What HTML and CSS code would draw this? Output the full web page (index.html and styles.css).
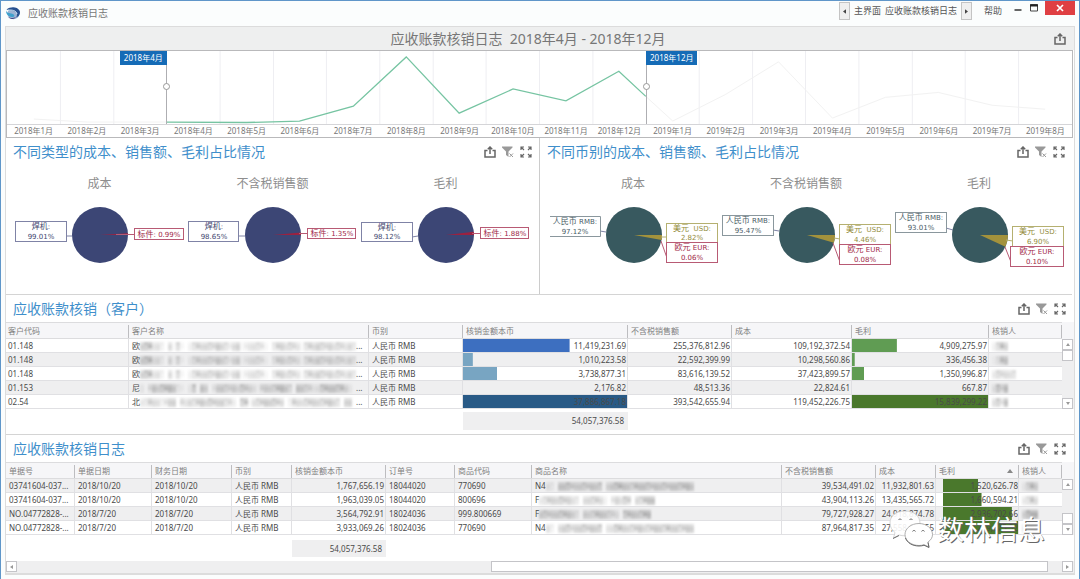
FILE: index.html
```html
<!DOCTYPE html>
<html lang="zh-CN">
<head>
<meta charset="utf-8">
<title>应收账款核销日志</title>
<link rel="stylesheet" href="styles.css">
</head>
<body>
<svg class="defs" width="0" height="0" aria-hidden="true">
  <symbol id="share" viewBox="0 0 12 12"><path d="M3.500 4.500H1v6.500h10V4.500H8.500M6 8V1.200M3.800 3.200L6 1l2.200 2.200" fill="none" stroke="#666" stroke-width="1.500"/></symbol>
  <symbol id="funnel" viewBox="0 0 12 12"><path d="M0 0.500h10.500v1L6.500 5.500V11L4 9V5.500L0 1.500z" fill="#999"/><path d="M7.500 7.500l3.500 3.500M11 7.500L7.500 11" stroke="#999" stroke-width="1"/></symbol>
  <symbol id="expand" viewBox="0 0 12 12"><path d="M1 4V1h3M8 1h3v3M11 8v3H8M4 11H1V8M1 1l3 3M11 1L8 4M11 11L8 8M1 11l3-3" fill="none" stroke="#666" stroke-width="1.200"/></symbol>
</svg>

<div class="window">
  <header class="titlebar">
    <svg class="logo" viewBox="0 0 16 16"><ellipse cx="8.500" cy="8.500" rx="6" ry="5.800" fill="#9db3d3"/><path d="M1.500 4.500c4-3.500 11-3 13 1 1.500 3-.500 6-3.500 7 1.500-2 1.500-5-1-6C7 5 4 5.500 1.500 4.500z" fill="#27508f"/><path d="M1 5.500c1 3 5 2.500 7 3.500s2 3-1 3C3 12 1 9 1 5.500z" fill="#3fa0cc"/><path d="M2.500 11c2 2.500 6 2.500 8.500 1-2 3-6.500 2.500-8.500-1z" fill="#3c3f80"/><path d="M3 5c4 0 8 0 9 4" fill="none" stroke="#cfe6f5"/></svg>
    <h1 class="app-title">应收账款核销日志</h1>
    <nav class="tabs">
      <button class="tab-arrow" aria-label="向左"><svg viewBox="0 0 4 6"><path d="M4 0v6L0 3z"/></svg></button>
      <a class="tab" href="#">主界面</a>
      <a class="tab" href="#">应收账款核销日志</a>
      <button class="tab-arrow" aria-label="向右"><svg viewBox="0 0 4 6"><path d="M0 0v6l4-3z"/></svg></button>
      <a class="tab help" href="#">帮助</a>
    </nav>
    <div class="win-buttons">
      <button class="win-btn" aria-label="最小化"><svg viewBox="0 0 8 8"><path d="M0.500 6h7" stroke="#333" stroke-width="1.500"/></svg></button>
      <button class="win-btn" aria-label="最大化"><svg viewBox="0 0 8 8"><path d="M0.500 0.500h7v6.500h-7z" fill="none" stroke="#444"/><path d="M0 1.500h8" stroke="#222" stroke-width="2"/></svg></button>
      <button class="win-btn close" aria-label="关闭"><svg viewBox="0 0 8 8"><path d="M1 1l6 6M7 1L1 7" stroke="#fff" stroke-width="1.700"/></svg></button>
    </div>
  </header>

  <main class="dashboard">
    <div class="banner">
      <h2 class="banner-title">应收账款核销日志&nbsp; 2018年4月 - 2018年12月</h2>
      <button class="tool" aria-label="导出"><svg><use href="#share"/></svg></button>
    </div>

    <section class="timeline">
      <div class="plot">
        <svg class="plot-lines" viewBox="0 0 1067 74" preserveAspectRatio="none">
          <path class="grid-lines" d="M53.500 0V74M107 0V74M213.500 0V74M267 0V74M320 0V74M373.500 0V74M427 0V74M480 0V74M533.500 0V74M587 0V74M693.500 0V74M747 0V74M800 0V74M853.500 0V74M907 0V74M960 0V74M1013.500 0V74"/>
          <path class="muted-line" d="M27 69L80 72L160 72M640 46L667 71L720 44L773 11L827 68L880 47L933 42L987 55L1040 59"/>
          <path class="range-line" d="M160 72L240 72.500L293 71L347 56L400 6L453 63L507 38.500L560 50.500L613 20.500L640 46"/>
        </svg>
        <div class="range">
          <span class="knob"></span><span class="knob end"></span>
          <span class="tag">2018年4月</span><span class="tag end">2018年12月</span>
        </div>
      </div>
      <div class="axis"><span>2018年1月</span><span>2018年2月</span><span>2018年3月</span><span>2018年4月</span><span>2018年5月</span><span>2018年6月</span><span>2018年7月</span><span>2018年8月</span><span>2018年9月</span><span>2018年10月</span><span>2018年11月</span><span>2018年12月</span><span>2019年1月</span><span>2019年2月</span><span>2019年3月</span><span>2019年4月</span><span>2019年5月</span><span>2019年6月</span><span>2019年7月</span><span>2019年8月</span></div>
    </section>

    <div class="pie-row">
      <section class="panel">
        <div class="panel-head"><h3>不同类型的成本、销售额、毛利占比情况</h3><div class="tools"><button class="tool" aria-label="导出"><svg><use href="#share"/></svg></button><button class="tool" aria-label="清除筛选"><svg><use href="#funnel"/></svg></button><button class="tool" aria-label="最大化"><svg><use href="#expand"/></svg></button></div></div>
        <div class="pies">
          <figure><figcaption>成本</figcaption>
            <svg class="pie navy" viewBox="0 0 173 100"><circle cx="87" cy="41" r="28"/><path class="red-fill" d="M87 41H115L114.900 39.300z"/><path class="lead" d="M53 42h6"/><path class="lead red" d="M103 40.500H122"/><rect x="2.500" y="27.500" width="51" height="20"/><text x="28" y="35"><tspan class="zh">焊机</tspan>:</text><text x="28" y="45">99.01%</text><rect class="red" x="121.500" y="34.500" width="49" height="11"/><text class="red" x="146" y="43"><tspan class="zh">标件</tspan>: 0.99%</text></svg></figure>
          <figure><figcaption>不含税销售额</figcaption>
            <svg class="pie navy" viewBox="0 0 173 100"><circle cx="87" cy="41" r="28"/><path class="red-fill" d="M87 41H115L114.800 38.600z"/><path class="lead" d="M53 42h6"/><path class="lead red" d="M113 39.500H122"/><rect x="2.500" y="27.500" width="50" height="20"/><text x="28" y="35"><tspan class="zh">焊机</tspan>:</text><text x="28" y="45">98.65%</text><rect class="red" x="121.500" y="34.500" width="48" height="10"/><text class="red" x="146" y="42"><tspan class="zh">标件</tspan>: 1.35%</text></svg></figure>
          <figure><figcaption>毛利</figcaption>
            <svg class="pie navy" viewBox="0 0 173 100"><circle cx="87" cy="41" r="28"/><path class="red-fill" d="M87 41H115L114.800 37.700z"/><path class="lead" d="M53 43l6-1"/><path class="lead red" d="M113 39.500H122"/><rect x="2.500" y="28.500" width="51" height="19"/><text x="28" y="36"><tspan class="zh">焊机</tspan>:</text><text x="28" y="45">98.12%</text><rect class="red" x="121.500" y="33.500" width="48" height="11"/><text class="red" x="146" y="42"><tspan class="zh">标件</tspan>: 1.88%</text></svg></figure>
        </div>
      </section>
      <section class="panel">
        <div class="panel-head"><h3>不同币别的成本、销售额、毛利占比情况</h3><div class="tools"><button class="tool" aria-label="导出"><svg><use href="#share"/></svg></button><button class="tool" aria-label="清除筛选"><svg><use href="#funnel"/></svg></button><button class="tool" aria-label="最大化"><svg><use href="#expand"/></svg></button></div></div>
        <div class="pies">
          <figure><figcaption>成本</figcaption>
            <svg class="pie teal" viewBox="0 0 173 100"><circle cx="87" cy="41" r="28"/><path class="gold-fill" d="M87 41H115A28 28 0 0 1 114.600 46z"/><path class="lead" d="M53 37l6 1"/><path class="lead gold" d="M114 43h6"/><path class="lead red" d="M114 47l6 17"/><path class="box" d="M3 22.500H53.500V42.500H3"/><text x="28" y="30"><tspan class="zh">人民币</tspan> RMB:</text><text x="28" y="40">97.12%</text><rect class="gold" x="119.500" y="29.500" width="51" height="19"/><text class="gold" x="145" y="37"><tspan class="zh">美元</tspan>&#160; USD:</text><text class="gold" x="145" y="46">2.82%</text><rect class="red" x="119.500" y="48.500" width="51" height="20"/><text class="red" x="145" y="56"><tspan class="zh">欧元</tspan> EUR:</text><text class="red" x="145" y="66">0.06%</text></svg></figure>
          <figure><figcaption>不含税销售额</figcaption>
            <svg class="pie teal" viewBox="0 0 173 100"><circle cx="87" cy="41" r="28"/><path class="gold-fill" d="M87 41H115A28 28 0 0 1 113.900 48.700z"/><path class="lead" d="M53 36l6 1"/><path class="lead gold" d="M114 44l6 1"/><path class="lead red" d="M113 49l7 19"/><rect x="2.500" y="21.500" width="51" height="20"/><text x="28" y="29"><tspan class="zh">人民币</tspan> RMB:</text><text x="28" y="39">95.47%</text><rect class="gold" x="119.500" y="30.500" width="51" height="20"/><text class="gold" x="145" y="38"><tspan class="zh">美元</tspan>&#160; USD:</text><text class="gold" x="145" y="48">4.46%</text><rect class="red" x="119.500" y="50.500" width="51" height="20"/><text class="red" x="145" y="58"><tspan class="zh">欧元</tspan> EUR:</text><text class="red" x="145" y="68">0.08%</text></svg></figure>
          <figure><figcaption>毛利</figcaption>
            <svg class="pie teal" viewBox="0 0 173 100"><circle cx="87" cy="41" r="28"/><path class="gold-fill" d="M87 41H115A28 28 0 0 1 112.400 52.800z"/><path class="lead" d="M53 34l7 2"/><path class="lead gold" d="M113 46l7 1"/><path class="lead red" d="M112 53l6 15"/><rect x="2.500" y="18.500" width="51" height="20"/><text x="28" y="26"><tspan class="zh">人民币</tspan> RMB:</text><text x="28" y="36">93.01%</text><rect class="gold" x="119.500" y="32.500" width="51" height="20"/><text class="gold" x="145" y="40"><tspan class="zh">美元</tspan>&#160; USD:</text><text class="gold" x="145" y="50">6.90%</text><rect class="red" x="117.500" y="52.500" width="53" height="20"/><text class="red" x="144" y="60"><tspan class="zh">欧元</tspan> EUR:</text><text class="red" x="144" y="70">0.10%</text></svg></figure>
        </div>
      </section>
    </div>

    <section class="table-panel">
      <div class="panel-head"><h3>应收账款核销（客户）</h3><div class="tools"><button class="tool" aria-label="导出"><svg><use href="#share"/></svg></button><button class="tool" aria-label="清除筛选"><svg><use href="#funnel"/></svg></button><button class="tool" aria-label="最大化"><svg><use href="#expand"/></svg></button></div></div>
      <div class="grid">
        <table class="customers">
          <colgroup><col class="w123"><col><col class="w94"><col class="w165"><col class="w104"><col class="w120"><col class="w137"><col class="w74"></colgroup>
          <thead><tr><th>客户代码</th><th>客户名称</th><th>币别</th><th>核销金额本币</th><th>不含税销售额</th><th>成本</th><th>毛利</th><th>核销人</th></tr></thead>
          <tbody>
            <tr><td>01.148</td><td>欧<i class="mask" data-tone="677342041510245455465424612344310355454314546545454353"></i>...</td><td>人民币 RMB</td><td class="num bar blue" style="--value:65%">11,419,231.69</td><td class="num">255,376,812.96</td><td class="num">109,192,372.54</td><td class="num bar green" style="--value:33%">4,909,275.97</td><td><i class="mask" data-tone="2575"></i></td></tr>
            <tr><td>01.148</td><td>欧<i class="mask" data-tone="677342041510245455465424612344310355454314546545454353"></i>...</td><td>人民币 RMB</td><td class="num bar sky" style="--value:6%">1,010,223.58</td><td class="num">22,592,399.99</td><td class="num">10,298,560.86</td><td class="num bar green" style="--value:2%">336,456.38</td><td><i class="mask" data-tone="1366"></i></td></tr>
            <tr><td>01.148</td><td>欧<i class="mask" data-tone="677342041510245455465424612344310355454314546545454353"></i>...</td><td>人民币 RMB</td><td class="num bar sky" style="--value:21%">3,738,877.31</td><td class="num">83,616,139.52</td><td class="num">37,423,899.57</td><td class="num bar green" style="--value:9%">1,350,996.87</td><td><i class="mask" data-tone="354444"></i></td></tr>
            <tr><td>01.153</td><td>尼<i class="mask" data-tone="203656676210260650256545465431455567640665423666766420"></i>...</td><td>人民币 RMB</td><td class="num">2,176.82</td><td class="num">48,513.36</td><td class="num">22,824.61</td><td class="num">667.87</td><td><i class="mask" data-tone="3747"></i></td></tr>
            <tr><td>02.54</td><td>北<i class="mask" data-tone="335442356043545656556442066145566654025445555556540560"></i>...</td><td>人民币 RMB</td><td class="num bar deep" style="--value:100%">37,886,867.18</td><td class="num">393,542,655.94</td><td class="num">119,452,226.75</td><td class="num bar forest" style="--value:100%">15,839,299.22</td><td><i class="mask" data-tone="4637"></i></td></tr>
          </tbody>
          <tfoot><tr><td colspan="3"></td><td><div class="total">54,057,376.58</div></td><td colspan="4"></td></tr></tfoot>
        </table>
        <div class="vscroll rows5"><button class="up" aria-label="向上"></button><span class="thumb"></span><button class="down" aria-label="向下"></button></div>
      </div>
    </section>

    <section class="table-panel">
      <div class="panel-head"><h3>应收账款核销日志</h3><div class="tools"><button class="tool" aria-label="导出"><svg><use href="#share"/></svg></button><button class="tool" aria-label="清除筛选"><svg><use href="#funnel"/></svg></button><button class="tool" aria-label="最大化"><svg><use href="#expand"/></svg></button></div></div>
      <div class="grid">
        <table class="log">
          <colgroup><col class="w69"><col class="w77"><col class="w80"><col class="w60"><col class="w94"><col class="w69"><col class="w77"><col><col class="w94"><col class="w60"><col class="w83"><col class="w44"></colgroup>
          <thead><tr><th>单据号</th><th>单据日期</th><th>财务日期</th><th>币别</th><th>核销金额本币</th><th>订单号</th><th>商品代码</th><th>商品名称</th><th>不含税销售额</th><th>成本</th><th><div class="sorted">毛利<svg viewBox="0 0 6 4"><path d="M3 0l3 4H0z"/></svg></div></th><th>核销人</th></tr></thead>
          <tbody>
            <tr><td>03741604-037...</td><td>2018/10/20</td><td>2018/10/20</td><td>人民币 RMB</td><td class="num">1,767,656.19</td><td>18044020</td><td>770690</td><td>N4<i class="mask" data-tone="3206775566566604677665667656665676676"></i></td><td class="num">39,534,491.02</td><td class="num">11,932,801.63</td><td class="num bar forest inset" style="--value:43%">1,520,626.78</td><td><i class="mask" data-tone="2575"></i></td></tr>
            <tr><td>03741604-037...</td><td>2018/10/20</td><td>2018/10/20</td><td>人民币 RMB</td><td class="num">1,963,039.05</td><td>18044020</td><td>800696</td><td>F<i class="mask" data-tone="34555655430455542035465055678"></i></td><td class="num">43,904,113.26</td><td class="num">13,435,565.72</td><td class="num bar forest inset" style="--value:47%">1,660,594.21</td><td><i class="mask" data-tone="3464"></i></td></tr>
            <tr><td>NO.04772828-...</td><td>2018/7/20</td><td>2018/7/20</td><td>人民币 RMB</td><td class="num">3,564,792.91</td><td>18024036</td><td>999.800669</td><td>F<i class="mask" data-tone="6655666653055566654306666677"></i></td><td class="num">79,727,928.27</td><td class="num">24,918,874.78</td><td class="num bar forest inset" style="--value:84%">2,936,702.66</td><td><i class="mask" data-tone="5878"></i></td></tr>
            <tr><td>NO.04772828-...</td><td>2018/7/20</td><td>2018/7/20</td><td>人民币 RMB</td><td class="num">3,933,069.26</td><td>18024036</td><td>770690</td><td>N4<i class="mask" data-tone="4204664566566603466555565556656565566"></i></td><td class="num">87,964,817.35</td><td class="num">27,558,185.55</td><td class="num bar forest inset" style="--value:93%">3,239,875.52</td><td><i class="mask" data-tone="3555"></i></td></tr>
          </tbody>
          <tfoot><tr><td colspan="4"></td><td><div class="total">54,057,376.58</div></td><td colspan="7"></td></tr></tfoot>
        </table>
        <div class="vscroll rows4"><button class="up" aria-label="向上"></button><span class="thumb low"></span><button class="down" aria-label="向下"></button></div>
      </div>
      <div class="hscroll"><button class="left" aria-label="向左"></button><span class="track"><span class="hthumb"></span></span><button class="right" aria-label="向右"></button></div>
      <div class="watermark">
        <svg viewBox="0 0 44 38"><g fill="#fff" stroke="#ccc" stroke-width="0.800"><path d="M16 1C7 1 1 6 1 13c0 4 2 7 5 9.500L4.500 28 10 25c2 .6 4 .8 6 .8 9 0 15-5.500 15-12.500S25 1 16 1z" fill-opacity=".9"/><path d="M30 13.500c-8 0-14 5-14 11s6 11 14 11c2 0 3.500-.3 5-.8L40 37l-1-5c3-2 4.500-4.500 4.500-7.500 0-6-6-11-13.500-11z" stroke="#999"/></g><path d="M16.500 28C18 32.500 23 36 30 36q3 0 5-.800L40 37.500l-1-5M4 28.500L10 25.500" stroke="#666" fill="none"/><g fill="none" stroke="#777"><path d="M9.500 10a1.600 1.600 0 0 1 3 0M20.500 10a1.600 1.600 0 0 1 3 0M23.500 21.500a1.600 1.600 0 0 1 3 0M32.500 21.500a1.600 1.600 0 0 1 3 0"/></g></svg>
        <span>数林信息</span>
      </div>
    </section>
  </main>
</div>
<script src="masks.js"></script>
</body>
</html>
```
FILE: styles.css
```css
* { box-sizing: border-box; }
body {
  margin: 0;
  background: #fbfcfd;
  color: #4a4a4a;
  font: 8px/12px "Noto Sans", "Noto Sans CJK SC", sans-serif;
}
h1, h2, h3, figure { margin: 0; font-weight: 400; }
button { margin: 0; padding: 0; border: 0; background: none; }
a { color: inherit; text-decoration: none; }
.defs { position: absolute; }

.window {
  min-height: 100vh;
  padding: 0 4px 4px;
  border: 1px solid #5f96c9;
  border-bottom: 0;
  background: #fbfdfd;
}
.titlebar { display: flex; align-items: flex-start; height: 25px; }
.logo { width: 16px; height: 16px; margin-top: 4px; }
.app-title { margin-left: 7px; font-size: 10px; line-height: 24px; color: #777; }
.tabs { display: flex; gap: 4px; margin-left: auto; font-size: 9px; line-height: 19px; color: #555; }
.tab-arrow {
  display: flex; align-items: center; justify-content: center;
  width: 11px; height: 18px; margin-top: 1px;
  border: 1px solid #c4c4c4; background: #efefef;
}
.tab-arrow svg { width: 3px; height: 5px; fill: #444; }
.help { margin-left: 8px; }
.win-buttons { display: flex; margin-left: 8px; }
.win-btn { display: flex; justify-content: center; width: 16px; height: 14px; padding-top: 3px; }
.win-btn svg { width: 8px; height: 8px; }
.win-btn.close { width: 30px; margin-left: 3px; background: #df3f43; }

.dashboard { border: 1px solid #dcdcdc; border-width: 1px 1px 2px; background: #fff; }
.banner { display: flex; align-items: center; height: 23px; padding: 0 8px; background: #eeefef; }
.banner-title { flex: 1; padding-right: 12px; text-align: center; font-size: 14px; line-height: 23px; color: #777; }
.tool { display: block; width: 12px; height: 12px; }
.tool svg { display: block; width: 12px; height: 12px; }

.timeline { border: 1px solid #b9b9bb; margin-right: 1px; }
.plot { position: relative; height: 74px; border-bottom: 1px solid #d5d5d8; }
.plot-lines { display: block; width: 100%; height: 73px; }
.plot-lines path { fill: none; vector-effect: non-scaling-stroke; }
.grid-lines { stroke: #eeeef2; }
.muted-line { stroke: #f2f2f2; }
.range-line { stroke: #76c4a2; stroke-width: 1.3px; }
.range {
  position: absolute; top: 0; bottom: 0; left: 15%; right: 40%;
  margin: 0 -1px;
  border: solid #aeaeb2; border-width: 0 1px;
}
.knob {
  position: absolute; top: 32px; left: -4px; width: 7px; height: 7px;
  border: 1px solid #999; border-radius: 50%; background: #fff;
}
.knob.end { left: auto; right: -4px; }
.tag {
  position: absolute; top: 0; right: 100%; padding: 0 4px;
  background: #156bb6; color: #fff; line-height: 14px; white-space: nowrap;
}
.tag.end { right: auto; left: 100%; }
.axis { display: grid; grid-template-columns: repeat(20, 1fr); color: #777; text-align: center; white-space: nowrap; }

.pie-row { display: grid; grid-template-columns: 1fr 1fr; margin-right: 2px; border-bottom: 1px solid #d4d4d4; }
.panel + .panel { border-left: 1px solid #ccc; }
.panel-head { display: flex; align-items: center; justify-content: space-between; height: 27px; padding: 0 8px 0 7px; }
.panel .panel-head { padding-right: 7px; }
.panel-head h3 { font-size: 14px; line-height: 27px; color: #3f8fcb; }
.tools { display: flex; gap: 6px; }
.pies { display: flex; justify-content: center; padding-top: 9px; }
.pies figcaption { font-size: 12px; line-height: 20px; text-align: center; color: #8e8e8e; }
.pie { display: block; width: 173px; height: 100px; font: 7px "DejaVu Sans", "Noto Sans CJK SC", sans-serif; text-anchor: middle; }
.pie .zh { font: 8px "Noto Sans CJK SC", sans-serif; }
.pie rect, .pie .box { fill: #fff; stroke: #7f83a6; }
.pie .lead { fill: none; stroke: #7f83a6; }
.teal rect, .teal .box { stroke: #8a979d; }
.pie rect.red, .pie .lead.red { stroke: #b85a74; }
.pie rect.gold, .pie .lead.gold { stroke: #b5b070; }
.navy circle { fill: #3c4675; }
.navy text { fill: #42476f; }
.teal circle { fill: #38595f; }
.teal text { fill: #4a5c66; }
.pie text.red { fill: #a02848; }
.pie text.gold { fill: #938c3c; }
.red-fill { fill: #9c2140; }
.gold-fill { fill: #a3923c; }

.table-panel { position: relative; }
.table-panel + .table-panel { border-top: 1px solid #d4d4d4; }
.grid { display: flex; padding-bottom: 4px; }
table { flex: 1; width: 100%; min-width: 0; table-layout: fixed; border-collapse: separate; border-spacing: 0; }
th {
  height: 17px; padding: 0 3px; text-align: left; font-weight: 400; color: #808080; line-height: 15px;
  background: linear-gradient(#bdbdc0, #bdbdc0) right 2px / 1px 13px no-repeat #f6f6f8;
  border: solid #dcdcde; border-width: 1px 0; white-space: nowrap;
}
td { height: 14px; padding: 0 3px; line-height: 13px; white-space: nowrap; overflow: hidden; }
tbody td { border-right: 1px solid #e0e0e3; border-bottom: 1px solid #e0e0e3; }
tbody td:last-child { border-right: 0; }
.customers tbody tr:nth-child(even), .log tbody tr:nth-child(odd) { background: #efeff0; }
.customers th:first-child, .customers td:first-child { padding-left: 2px; }
.num { text-align: right; padding-right: 1px; }
.bar {
  background: linear-gradient(var(--tint), var(--tint)) 0 0 / var(--value) 100% no-repeat;
}
.bar.inset { background-position: 7px 0; padding-right: 0; }
.blue { --tint: #3d6fc0; }
.sky { --tint: #78a5c2; }
.deep { --tint: #295a86; }
.green { --tint: #609c53; }
.forest { --tint: #4a782c; }
tfoot td { padding: 3px 0 0; }
.log tfoot td { padding-top: 5px; }
.total { padding-right: 4px; line-height: 18px; text-align: right; background: #efeff0; }
.log .total { line-height: 17px; }
.sorted { display: flex; align-items: center; justify-content: space-between; padding-right: 3px; }
.sorted svg { width: 6px; height: 4px; fill: #888; }
.mask { display: inline-block; height: 9px; vertical-align: middle; }
.mask svg { display: block; filter: blur(0.8px); }
.w44 { width: 43px; } .w60 { width: 60px; } .w69 { width: 69px; } .w74 { width: 73px; }
.w77 { width: 77px; } .w80 { width: 80px; } .w83 { width: 83px; } .w94 { width: 94px; }
.w104 { width: 104px; } .w120 { width: 120px; } .w123 { width: 123px; }
.w137 { width: 137px; } .w165 { width: 165px; }

.vscroll { display: flex; flex-direction: column; width: 12px; padding-top: 17px; background: linear-gradient(#f6f6f8 17px, #efeff0 17px); }
.rows5 { height: 87px; }
.rows4 { height: 73px; }
.vscroll button, .hscroll button {
  display: flex; align-items: center; justify-content: center;
  width: 11px; height: 11px; border: 1px solid #c4c4c8; background: #fff;
}
.vscroll .down { margin-top: auto; }
.vscroll button::before, .hscroll button::before { content: ""; border: 2px solid transparent; }
.vscroll .up::before { border-top: 0; border-bottom: 3px solid #999; }
.vscroll .down::before { border-bottom: 0; border-top: 3px solid #999; }
.hscroll .left::before { border-left: 0; border-right: 3px solid #999; }
.hscroll .right::before { border-right: 0; border-left: 3px solid #999; }
.thumb { width: 11px; height: 11px; border: 1px solid #c4c4c8; background: #fff; }
.thumb.low { margin-top: auto; }
.thumb.low + .down { margin-top: 0; }
.hscroll { display: flex; height: 12px; padding-right: 1px; background: #efeff0; }
.track { flex: 1; display: flex; justify-content: flex-end; padding-right: 14px; }
.hthumb { width: 54%; height: 11px; border: 1px solid #c4c4c8; background: #fff; }

.watermark {
  position: absolute; right: 29px; bottom: 25px;
  display: flex; align-items: center; gap: 4px;
  font: 27px/36px "Noto Sans CJK SC", sans-serif; color: #fff;
  text-shadow: 1px 1px 0 #666;
}
.watermark svg { width: 44px; height: 38px; }
```
FILE: masks.js
```javascript
// Draws the pixelated blocks that hide customer, product and staff names.
document.querySelectorAll(".mask").forEach(function (el) {
  var tones = el.dataset.tone.split("").map(Number);
  var width = tones.length * 4;
  var rects = "";
  tones.forEach(function (tone, i) {
    [0.04, 0.05, 0.035].forEach(function (weight, row) {
      var shade = tone * weight * (((i * 7 + row * 5) % 4) * 0.14 + 0.7);
      rects += '<rect x="' + i * 4 + '" y="' + row * 3 + '" width="4" height="3" fill="#444" fill-opacity="' + shade.toFixed(2) + '"/>';
    });
  });
  el.innerHTML = '<svg width="' + width + '" height="9">' + rects + "</svg>";
});
```
